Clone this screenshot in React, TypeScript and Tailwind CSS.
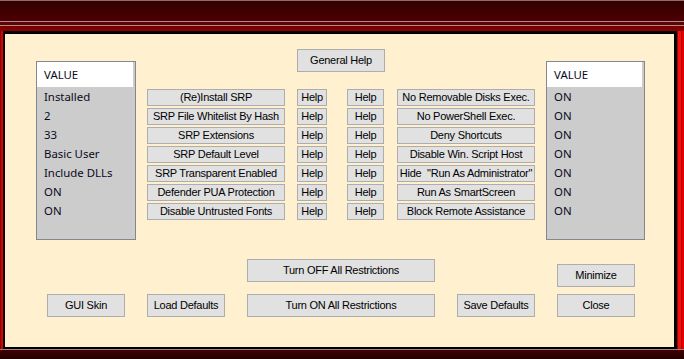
import React from 'react';

const btn =
  "flex items-center justify-center bg-[#e1e1e1] border border-[#adadad] text-black text-[11px] leading-none whitespace-nowrap tracking-[-0.25px] font-['Liberation_Sans',Arial,sans-serif]";

const rows: [string, string][] = [
  ['(Re)Install SRP', 'No Removable Disks Exec.'],
  ['SRP File Whitelist By Hash', 'No PowerShell Exec.'],
  ['SRP Extensions', 'Deny Shortcuts'],
  ['SRP Default Level', 'Disable Win. Script Host'],
  ['SRP Transparent Enabled', 'Hide \u00a0"Run As Administrator"'],
  ['Defender PUA Protection', 'Run As SmartScreen'],
  ['Disable Untrusted Fonts', 'Block Remote Assistance'],
];

const leftValues = ['Installed', '2', '33', 'Basic User', 'Include DLLs', 'ON', 'ON'];
const rightValues = ['ON', 'ON', 'ON', 'ON', 'ON', 'ON', 'ON'];

function ValueList({ items, width }: { items: string[]; width: string }) {
  return (
    <div
      className={`${width} mt-[12px] h-[179px] border border-[#828790] bg-[#cccccc] text-[11.4px] text-[#0a0a1e] font-['Noto_Sans',sans-serif]`}
    >
      <div className="h-[25px] mr-[2px] bg-white pl-[7px] leading-[25px]">VALUE</div>
      {items.map((v, i) => (
        <div key={i} className="h-[19px] pl-[7px] leading-[19px]">
          {v}
        </div>
      ))}
    </div>
  );
}

export default function App() {
  return (
    <div className="w-[684px] h-[359px] overflow-hidden flex flex-col bg-[#1b4f8a]">
      {/* title band */}
      <div className="h-[1px] bg-[#8e6a6a]" />
      <div className="h-[20px] bg-gradient-to-b from-[#340000] to-[#4a0004]" />
      <div className="h-[1px] bg-[#b98585]" />
      <div className="h-[3px] bg-[#5a0606]" />
      <div className="h-[1px] bg-[#b98585]" />
      <div className="h-[5px] bg-gradient-to-b from-[#700000] to-[#8c0000]" />

      <div className="flex h-[318px]">
        <div className="flex">
          <div className="w-[1px] bg-[#7d0000]" />
          <div className="w-[2px] bg-[#d80000]" />
        </div>

        <div className="w-[674px] border-t-[3px] border-l-[2px] border-r-[3px] border-b-[2px] border-black bg-[#fff1d0] flex flex-col">
          {/* middle */}
          <div className="flex pl-[31px] pt-[15px]">
            <ValueList items={leftValues} width="w-[100px]" />

            <div className="ml-[11px] flex flex-col">
              <div className={`${btn} ml-[150px] w-[88px] h-[23px]`}>General Help</div>
              <div className="mt-[17px] flex flex-col gap-[2px]">
                {rows.map(([a, b], i) => (
                  <div key={i} className="flex h-[17px]">
                    <div className={`${btn} w-[138px]`}>{a}</div>
                    <div className={`${btn} ml-[12px] w-[30px]`}>Help</div>
                    <div className={`${btn} ml-[20px] w-[37px]`}>Help</div>
                    <div className={`${btn} ml-[13px] w-[138px]`}>{b}</div>
                  </div>
                ))}
              </div>
            </div>

            <div className="ml-[11px]">
              <ValueList items={rightValues} width="w-[99px]" />
            </div>
          </div>

          {/* bottom */}
          <div className="mt-[19px] pl-[42px] flex items-end gap-[22px]">
            <div className={`${btn} w-[78px] h-[23px]`}>GUI Skin</div>
            <div className={`${btn} w-[78px] h-[23px]`}>Load Defaults</div>
            <div className="flex flex-col gap-[12px]">
              <div className={`${btn} w-[188px] h-[23px]`}>Turn OFF All Restrictions</div>
              <div className={`${btn} w-[188px] h-[23px]`}>Turn ON All Restrictions</div>
            </div>
            <div className={`${btn} w-[78px] h-[23px]`}>Save Defaults</div>
            <div className="flex flex-col gap-[7px]">
              <div className={`${btn} w-[78px] h-[23px]`}>Minimize</div>
              <div className={`${btn} w-[78px] h-[23px]`}>Close</div>
            </div>
          </div>
        </div>

        <div className="flex">
          <div className="w-[1px] bg-[#a00000]" />
          <div className="w-[3px] bg-[#f21010]" />
          <div className="w-[1px] bg-[#b80000]" />
          <div className="w-[2px] bg-[#e80000]" />
        </div>
      </div>

      <div className="h-[1px] bg-[#9c8585]" />
      <div className="h-[9px] bg-gradient-to-b from-[#420000] to-[#220000]" />
    </div>
  );
}
